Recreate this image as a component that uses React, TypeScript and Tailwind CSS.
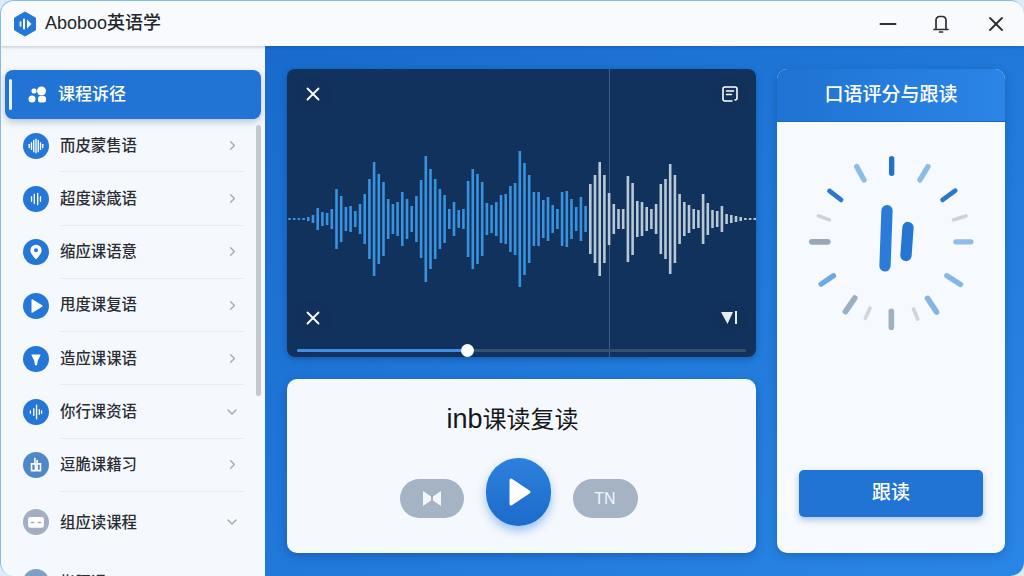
import { ChevronDown, ChevronRight, Minus, X } from "lucide-react";
import type { ReactNode } from "react";

const FONT = { fontFamily: '"Liberation Sans", "Noto Sans CJK SC", sans-serif' };

// half heights of the wave form, one per bar
const WAVE = [
  1, 1, 1, 1, 2, 4, 11, 7, 6, 10, 30, 23, 12, 13, 8, 15, 25, 40, 57, 45,
  37, 20, 15, 17, 27, 20, 13, 23, 39, 63, 50, 40, 30, 24, 10, 17, 9, 10, 38, 50,
  45, 37, 16, 14, 17, 24, 25, 33, 36, 68, 56, 44, 27, 27, 19, 22, 14, 10, 27, 28,
  20, 12, 22, 13, 35, 44, 57, 44, 26, 15, 10, 10, 43, 36, 18, 17, 12, 10, 15, 35,
  40, 55, 44, 25, 17, 14, 10, 9, 25, 16, 9, 8, 13, 5, 4, 3, 2, 1, 1, 1,
];

const TICKS = [
  [367, 296, 367, 340, 16, "#1f72cc"],
  [262, 320, 284, 360, 16, "#8dbbe8"],
  [180, 393, 215, 420, 14, "#2a77cc"],
  [147, 468, 180, 480, 11, "#ccd3da"],
  [127, 546, 175, 546, 17, "#98a8b8"],
  [155, 673, 192, 648, 16, "#6aa9e4"],
  [228, 756, 256, 715, 17, "#9db0c3"],
  [288, 776, 302, 745, 11, "#cfd6dc"],
  [366, 755, 366, 803, 17, "#9fb0bf"],
  [433, 748, 445, 778, 11, "#cfd6dc"],
  [475, 716, 502, 757, 17, "#86b5e4"],
  [533, 648, 574, 674, 16, "#84b6e8"],
  [560, 546, 605, 546, 16, "#8fbcea"],
  [553, 480, 590, 468, 11, "#ccd3da"],
  [520, 420, 558, 392, 14, "#2a77cc"],
  [452, 360, 476, 320, 16, "#8dbbe8"],
] as const;

const Dot = ({ children, tone }: { children: ReactNode; tone?: string }) => (
  <div className={`w-[26px] h-[26px] rounded-full shrink-0 flex items-center justify-center ${tone ?? "bg-[#2477d6]"}`}>
    <svg width="18" height="18" viewBox="0 0 16 16" fill="#fff" stroke="#fff" strokeLinecap="round">
      {children}
    </svg>
  </div>
);

const bars = (xs: [number, number][]) =>
  xs.map(([x, h]) => <line key={x} x1={x} x2={x} y1={8 - h} y2={8 + h} strokeWidth="1.2" />);

const NAV: { label: string; icon: ReactNode; arrow?: "down" | "none"; tone?: string; h?: string; line?: boolean }[] = [
  { label: "而皮蒙售语", line: true, icon: bars([[2, 1.5], [4, 3], [6, 5], [8, 6], [10, 5], [12, 3], [14, 1.5]]) },
  { label: "超度读箴语", line: true, icon: bars([[4, 2], [6.5, 4], [9.5, 5], [12, 2]]) },
  { label: "缩应课语意", line: true, icon: <path d="M8 1.5a5 5 0 0 0-5 5c0 3.5 5 8 5 8s5-4.5 5-8a5 5 0 0 0-5-5zm0 6.800a1.800 1.800 0 1 1 0-3.600 1.800 1.800 0 0 1 0 3.600z" stroke="none" fillRule="evenodd" /> },
  { label: "甩度课复语", line: true, icon: <path d="M4.500 2.500v11l9-5.500z" strokeLinejoin="round" /> },
  { label: "造应课课语", line: true, icon: <path d="M4.500 4.500h7L9 9.500l-.5 3.500h-1L7 9.500z" strokeLinejoin="round" /> },
  { label: "你行课资语", line: true, arrow: "down", icon: bars([[3, 1], [6, 3], [8.5, 6], [11, 2], [13, 1]]) },
  { label: "逗脆课籍习", line: true, tone: "bg-[#4f88c8]", icon: <path d="M7 2v5H4v6h3.500V7M9 4v9h3V7H9" fill="none" strokeWidth="1.400" /> },
  { label: "组应读课程", arrow: "down", tone: "bg-[#a3afc0]", h: "h-[60px]", icon: <><rect x="1" y="3.500" width="14" height="9.500" rx="2" stroke="none" /><path d="M4 8.500h2M10 8.500h2" stroke="#a3afc0" strokeWidth="1.400" /></> },
  { label: "指腰课", arrow: "none", tone: "bg-[#7f9fc4]", h: "h-[60px]", icon: <circle cx="8" cy="8" r="3" stroke="none" /> },
];

function Sidebar() {
  return (
    <aside className="relative w-[264px] shrink-0 bg-[#f5f8fc] overflow-hidden pt-[24px]">
      <div className="relative mx-[4px] h-[49px] rounded-[8px] bg-[#2174d4] flex items-center pl-[23px] gap-[10px] shadow-[0_3px_7px_rgba(40,80,130,0.3)]">
        <div className="absolute left-[4px] top-[9px] bottom-[9px] w-[3px] rounded-full bg-[#e8f2fc]" />
        <svg width="20" height="18" viewBox="0 0 20 18" fill="#fff">
          <circle cx="13.500" cy="5" r="4.500" />
          <rect x="3.500" y="2.500" width="5" height="5" rx="2" />
          <circle cx="4" cy="13" r="3.500" />
          <rect x="10" y="10" width="8" height="6.500" rx="2.500" />
        </svg>
        <span className="text-[17px] font-medium text-white">课程诉径</span>
      </div>

      {NAV.map((n) => (
        <div key={n.label} className={`flex items-center pl-[22px] pr-[21px] gap-[11px] ${n.h ?? "h-[53.3px]"}`}>
          <Dot tone={n.tone}>{n.icon}</Dot>
          <div className={`flex-1 h-full flex items-center justify-between pr-[4px] ${n.line ? "border-b border-[#e7ebf0]" : ""}`}>
            <span className="text-[15.4px] font-medium text-[#2a2e34]">{n.label}</span>
            {n.arrow === "down" && <ChevronDown size={16} className="text-[#a0a7b0]" />}
            {!n.arrow && <ChevronRight size={15} className="text-[#a0a7b0]" />}
          </div>
        </div>
      ))}

      {/* scrollbar */}
      <div className="absolute left-[255px] top-[79px] h-[271px] w-[5px] rounded-full bg-[#c3c8cf]" />
    </aside>
  );
}

function Waveform() {
  return (
    <svg width="469" height="140" viewBox="0 0 469 140" className="block">
      {WAVE.map((h, i) => (
        <line
          key={i}
          x1={2.5 + i * 4.7}
          x2={2.5 + i * 4.7}
          y1={70 - h}
          y2={70 + h}
          stroke={i < 64 ? "#3a92dc" : "#b8c8d6"}
          strokeWidth="2.6"
        />
      ))}
    </svg>
  );
}

const Round = ({ children }: { children: ReactNode }) => (
  <div className="w-[36px] h-[36px] rounded-full bg-[#11305a] flex items-center justify-center">{children}</div>
);

function WavePanel() {
  return (
    <div className="relative h-[288px] rounded-[8px] bg-[#12325e] shadow-[0_2px_6px_rgba(10,50,110,0.4)] flex flex-col">
      <div className="absolute left-[322px] top-0 bottom-0 w-px bg-[#3e5f86]" />
      <div className="relative flex justify-between items-center px-[8px] pt-[7px]">
        <Round><X size={22} className="text-white" /></Round>
        <Round>
          <svg width="18" height="18" viewBox="0 0 18 18" fill="none" stroke="#fff" strokeWidth="1.600" strokeLinecap="round" strokeLinejoin="round">
            <path d="M11 16H4a2 2 0 0 1-2-2V4a2 2 0 0 1 2-2h10a2 2 0 0 1 2 2v9a2 2 0 0 1-2 2" />
            <path d="M5.500 6h7M5.500 9.500h5" />
          </svg>
        </Round>
      </div>
      <div className="relative mt-[37px]">
        <Waveform />
      </div>
      <div className="relative flex justify-between items-center px-[8px] mt-[11px]">
        <Round><X size={22} className="text-white" /></Round>
        <Round>
          <svg width="18" height="14" viewBox="0 0 18 14" fill="#e8edf2">
            <path d="M0 1h12L6.500 13z" />
            <rect x="14" y="0" width="2" height="13" />
          </svg>
        </Round>
      </div>
      <div className="relative mx-[10px] mt-[13px] h-[3px] rounded-full bg-[#33506f]">
        <div className="h-full w-[166px] rounded-full bg-[#3f90e4]" />
        <div className="absolute left-[164px] top-[-5px] w-[13px] h-[13px] rounded-full bg-white" />
      </div>
    </div>
  );
}

function PlayerCard() {
  return (
    <div className="flex-1 rounded-[10px] bg-[#f5f8fd] shadow-[0_3px_10px_rgba(10,50,110,0.35)] flex flex-col items-center pt-[22px]">
      <div className="text-[24px] leading-[36px] text-[#14171c] mr-[18px]">
        <span className="text-[27px]">inb</span>课读复读
      </div>
      <div className="flex items-start gap-[22px] mt-[20px] mr-[6px]">
        <div className="mt-[21px] w-[64px] h-[39px] rounded-full bg-[#a6b3c4] flex items-center justify-center">
          <svg width="20" height="17" viewBox="0 0 20 17" fill="#f3f6fa">
            <path d="M1 1l8 5.500v4L1 16zM19 1l-8 5.500v4l8 5.500z" />
          </svg>
        </div>
        <div className="w-[65px] h-[68px] rounded-full bg-gradient-to-b from-[#2c80dc] to-[#1c6ccb] flex items-center justify-center shadow-[0_5px_10px_rgba(50,130,230,0.45)]">
          <svg width="22" height="28" viewBox="0 0 22 28" fill="#fff" stroke="#fff" strokeWidth="3" strokeLinejoin="round" className="ml-[3px]">
            <path d="M2 2v24l18-12z" />
          </svg>
        </div>
        <div className="mt-[21px] w-[65px] h-[39px] rounded-full bg-[#a6b3c4] flex items-center justify-center text-[16px] font-medium text-[#f3f6fa]">
          TN
        </div>
      </div>
    </div>
  );
}

function ScorePanel() {
  return (
    <div className="w-[228px] shrink-0 rounded-[10px] overflow-hidden bg-[#f6f9fd] shadow-[0_3px_10px_rgba(10,50,110,0.3)] flex flex-col">
      <div className="h-[53px] shrink-0 bg-gradient-to-r from-[#1f73d2] to-[#2b85e6] border-b border-[#1a68c0] flex items-center justify-center text-[19px] font-medium text-white">
        口语评分与跟读
      </div>
      <div className="flex-1 flex flex-col items-center pt-[33px]">
        <svg width="170" height="178" viewBox="110 285 510 535">
          {TICKS.map(([x1, y1, x2, y2, w, c], i) => (
            <line key={i} x1={x1} y1={y1} x2={x2} y2={y2} stroke={c} strokeWidth={w} strokeLinecap="round" />
          ))}
          <line x1="353" y1="452" x2="347" y2="618" stroke="#2b7cd8" strokeWidth="34" strokeLinecap="round" />
          <line x1="416" y1="503" x2="410" y2="587" stroke="#2476d2" strokeWidth="34" strokeLinecap="round" />
        </svg>
        <div className="mt-auto mb-[36px] w-[184px] h-[47px] rounded-[5px] bg-[#2174d4] shadow-[0_3px_6px_rgba(30,100,190,0.35)] flex items-center justify-center text-[19px] font-medium text-white">
          跟读
        </div>
      </div>
    </div>
  );
}

export default function App() {
  return (
    <div className="w-[1024px] h-[576px] bg-[#dcebf7] overflow-hidden" style={FONT}>
      <div className="w-full h-full rounded-[14px] overflow-hidden border-t border-l border-[#86bbe6] flex flex-col">
        <header className="h-[45px] shrink-0 bg-[#f8fafd] flex items-center pl-[12px] pr-[16px] shadow-[0_1px_3px_rgba(30,50,80,0.25)] z-10">
          <svg width="24" height="26" viewBox="0 0 24 26">
            <path d="M12 1l10.500 6v12L12 25 1.500 19V7z" fill="#2477d6" stroke="#2477d6" strokeLinejoin="round" />
            <rect x="6.500" y="10" width="2" height="6" rx="1" fill="#cfe3f8" />
            <rect x="10" y="7.500" width="2" height="11" rx="1" fill="#fff" />
            <path d="M14 8.500l4.500 4.500-4.500 4.500z" fill="#fff" />
          </svg>
          <span className="ml-[8px] text-[18px] font-medium text-[#23272d]">Aboboo英语学</span>
          <Minus size={26} strokeWidth={1.7} className="ml-auto text-[#2b2f35]" />
          <svg width="20" height="20" viewBox="0 0 20 20" fill="none" stroke="#2b2f35" strokeWidth="1.7" strokeLinecap="round" strokeLinejoin="round" className="ml-[30px]">
            <path d="M5 15V6a3.500 3.500 0 0 1 3.500-3.500h3A3.500 3.500 0 0 1 15 6v9" />
            <path d="M3 15.500h14M8.500 18h3" />
          </svg>
          <X size={24} strokeWidth={1.8} className="ml-[33px] text-[#2b2f35]" />
        </header>
        <div className="flex-1 flex min-h-0">
          <Sidebar />
          <main className="flex-1 flex gap-[21px] pl-[22px] pr-[19px] pt-[23px] pb-[23px] bg-gradient-to-br from-[#186bcc] to-[#2a86e6]">
            <div className="w-[469px] shrink-0 flex flex-col gap-[22px]">
              <WavePanel />
              <PlayerCard />
            </div>
            <ScorePanel />
          </main>
        </div>
      </div>
    </div>
  );
}
